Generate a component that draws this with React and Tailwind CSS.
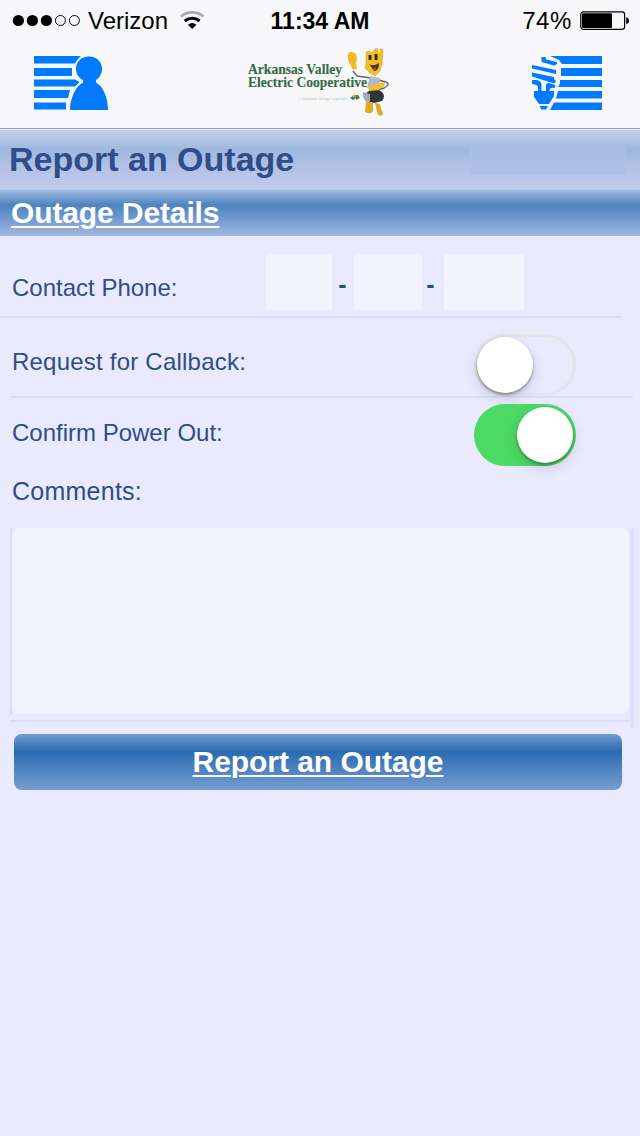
import React from 'react';

function SignalDots() {
  return (
    <svg className="ml-[12px] h-[14px] w-[70px]" viewBox="0 0 70 14">
      <circle cx="6.4" cy="6.5" r="5.6" />
      <circle cx="20.4" cy="6.5" r="5.6" />
      <circle cx="34.4" cy="6.5" r="5.6" />
      <circle cx="48.4" cy="6.5" r="5" fill="none" stroke="#000" />
      <circle cx="62.4" cy="6.5" r="5" fill="none" stroke="#000" />
    </svg>
  );
}

function WifiIcon() {
  return (
    <svg className="ml-[11px] h-[20px] w-[26px]" viewBox="0 0 26 20" fill="none">
      <path d="M2 5.5A17.5 17.5 0 0 1 24.4 5.5" stroke="#a9a9ab" strokeWidth="2.7" />
      <path d="M5.8 10A11.5 11.5 0 0 1 20.6 10" stroke="#000" strokeWidth="3" />
      <path d="M9 13.7Q13.2 10.3 17.4 13.7L13.2 18.1Z" fill="#000" />
    </svg>
  );
}

function BatteryIcon() {
  return (
    <svg className="ml-[8px] h-[20px] w-[50px]" viewBox="0 0 50 20">
      <rect x="0.8" y="0.8" width="43.8" height="17.6" rx="2.6" fill="none" stroke="#000" strokeWidth="1.2" />
      <rect x="2" y="2.2" width="30" height="14.8" rx="1" />
      <path d="M46.2 6.2Q49 6.8 49 9.6T46.2 13.2Z" />
    </svg>
  );
}

function StatusBar() {
  return (
    <div className="grid h-[40px] grid-cols-[1fr_auto_1fr] items-center pt-[2px] text-[24px] text-black">
      <div className="flex items-center">
        <SignalDots />
        <span className="ml-[6px]">Verizon</span>
        <WifiIcon />
      </div>
      <div className="text-[23px] font-bold">11:34 AM</div>
      <div className="flex items-center justify-end pr-[10px]">
        <span className="text-[24px] tracking-[0.6px]">74%</span>
        <BatteryIcon />
      </div>
    </div>
  );
}

function AccountIcon() {
  return (
    <svg className="h-[55px] w-[76px]" viewBox="0 0 76 55" fill="#007aff">
      <path d="M0 0H47Q43 3 41 7.5H0ZM0 12H38V20H0ZM0 23.5H41L45.5 26L41 30.5H0ZM0 34H36L34 42H0ZM0 46.5H32V53.5H0Z" />
      <path d="M55 .5C63 .5 68 6 68 13C68 18 65.5 21.5 62 24V26.5C69 30 74 42 74 54H36C36 42 42 30 49 26.5V24C45 22 42 18 42 13C42 6 47 .5 55 .5Z" />
    </svg>
  );
}

function OutageIcon() {
  return (
    <svg className="h-[55px] w-[70px]" viewBox="0 0 70 55" fill="#007aff">
      <path d="M18 0H70V8H30L27 4ZM29 12H70V20H29ZM28 24H70V31H26L28 28ZM26 35H70V42.5H24ZM22 46.5H70V54H18Z" />
      <path d="M9.5 1H13.5L14 3.5L25 6Q26 8 22 9.5L9.5 6ZM0 9L24 14V18L0 12.5ZM0 16.5L22 21V23L24 25L22 27.5L0 20.5Z" />
      <path d="M0 24H5Q9.5 25 9.5 29V35H14V30Q14 27 17 27L23 29V32Q17.5 31 17.5 35H22V40L17 48H7L2 41V35H6V31Q6 28.5 0 28Z" />
      <path d="M7.5 50H16L14 53.5H9.5Z" />
    </svg>
  );
}

function Logo() {
  return (
    <svg className="h-[76px] w-[150px]" viewBox="0 0 150 76">
      <g fill="#326b43" stroke="#326b43" strokeWidth=".1" fontFamily="'Liberation Serif', serif" fontWeight="bold">
        <text x="6" y="28.5" fontSize="14" textLength="94" lengthAdjust="spacingAndGlyphs">Arkansas Valley</text>
        <text x="6" y="42" fontSize="14" textLength="119" lengthAdjust="spacingAndGlyphs">Electric Cooperative</text>
      </g>
      <text x="56" y="54.5" fontSize="4.2" fill="#a9c9b3" fontFamily="'Liberation Serif', serif" textLength="50" lengthAdjust="spacingAndGlyphs">A Touchstone Energy Cooperative</text>
      <path d="M108 53L112 50L114 53L111 55Z" fill="#2a6f91" />
      <path d="M113 50L116 50L118 53L114 55Z" fill="#467d45" />
      <circle cx="112" cy="51" r="1.5" fill="#e5aa42" />
      <path d="M111 26L115 31L129 33L144 37Q149 39 142 43L135 45" fill="none" stroke="#65676d" strokeWidth="1.4" />
      <path d="M106 9Q107 6 111 7L114 9L115 14L114 18L115 23Q111 27 109 21L106 15Z" fill="#f0bb2b" />
      <path d="M124 8Q124 6 127 6L130 8L133 4Q136 2 136 6V8H138V4Q141 3 141 6L140 18L138 26L133 31L128 28L123 23L124 17Z" fill="#f3bd25" stroke="#d6a023" strokeWidth=".5" />
      <path d="M128 10V15M134 9V15" stroke="#28261e" strokeWidth="2.8" />
      <path d="M127 19Q131 22 137 18Q137 26 132 26Z" fill="#56321d" />
      <path d="M130 24L134 22L133 25Z" fill="#d65334" />
      <path d="M128 31L138 33L137 45L128 46L125 42Z" fill="#b6bac3" />
      <path d="M127 42L141 37Q145 39 141 42L134 46L127 47Z" fill="#f2c12d" />
      <path d="M127 46Q121 49 124 56L132 58L140 56Q144 51 140 47L137 45Z" fill="#30343c" />
      <path d="M121 47L128 49V58Q120 56 121 47Z" fill="#a4a8b1" />
      <path d="M124 57H131V66Q129 70 123 67ZM133 58L138 59L139 64L141 68Q141 72 136 70Z" fill="#dfaa25" />
    </svg>
  );
}

function Toggle({ on = false }) {
  return on ? (
    <button aria-label="Confirm Power Out" className="flex h-[62px] w-[102px] items-center justify-end rounded-full bg-[#4cd964] pr-[3px]">
      <span className="size-[56px] rounded-full bg-white shadow-[0_5px_14px_rgba(0,0,0,0.15),0_2px_3px_rgba(0,0,0,0.3)]" />
    </button>
  ) : (
    <button aria-label="Request for Callback" className="flex h-[62px] w-[102px] items-center rounded-full border-[3px] border-[#e5e5e8]">
      <span className="size-[56px] rounded-full bg-white shadow-[0_5px_14px_rgba(0,0,0,0.15),0_2px_3px_rgba(0,0,0,0.35)]" />
    </button>
  );
}

export default function App() {
  return (
    <div className="h-[1136px] w-[640px] overflow-hidden bg-[#e9eafe] font-['Liberation_Sans',sans-serif] text-[#304d87]">
      <header className="h-[130px] border-b border-[#e5e6fa] bg-[#f7f7f9]">
        <StatusBar />
        <nav className="flex h-[89px] items-start justify-between border-b border-[#9a9cb8] pr-[38px] pl-[34px]">
          <button aria-label="Account" className="pt-[16px]"><AccountIcon /></button>
          <div className="pt-[5px] pr-[8px]"><Logo /></div>
          <button aria-label="Outages" className="pt-[16px]"><OutageIcon /></button>
        </nav>
      </header>
      <div className="flex h-[60px] items-center justify-between bg-[linear-gradient(#c4cfed_0%,#9db7df_33%,#aebfe6_55%,#c2cdec_100%)] pr-[14px] pl-[9px]">
        <h1 className="pb-[2px] text-[34px] leading-[58px] font-bold">Report an Outage</h1>
        <div className="h-[29px] w-[157px] rounded-[3px] bg-[linear-gradient(#a8bde3,#aec0e8)]" />
      </div>
      <div className="h-[46px] bg-[linear-gradient(#a0b8df_0%,#4d84bf_33%,#749bd0_64%,#a0b7e2_100%)] pl-[11px]">
        <h2 className="text-[30px] leading-[46px] font-bold tracking-[-0.12px] text-white underline decoration-2 underline-offset-[3px]">Outage Details</h2>
      </div>
      <main className="text-[24px]">
        <section className="mr-[18px] flex h-[82px] items-start border-b-2 border-[#dadcfc] pt-[18px] pl-[12px]">
          <label className="w-[254px] pt-[16px] leading-[36px]">Contact Phone:</label>
          <div className="h-[56px] w-[66px] bg-[#f3f3ff]" />
          <span className="w-[22px] pr-[1px] text-center text-[25px] leading-[60px] font-bold">-</span>
          <div className="h-[56px] w-[68px] bg-[#f3f3ff]" />
          <span className="w-[22px] pr-[5px] text-center text-[25px] leading-[60px] font-bold">-</span>
          <div className="h-[56px] w-[80px] bg-[#f3f3ff]" />
        </section>
        <section className="mr-[7px] ml-[10px] flex h-[80px] items-start justify-between border-b-2 border-[#dadcfc] pt-[16px] pr-[57px] pl-[2px]">
          <label className="pt-[10px] leading-[36px] tracking-[0.22px]">Request for Callback:</label>
          <Toggle />
        </section>
        <section className="flex h-[76px] items-start justify-between pt-[6px] pr-[64px] pl-[12px]">
          <label className="pt-[11px] leading-[36px]">Confirm Power Out:</label>
          <Toggle on />
        </section>
        <label className="block h-[54px] pl-[12px] text-[25px] leading-[34px] tracking-[0.25px]">Comments:</label>
        <div className="ml-[10px] flex h-[200px] w-[624px] border-r-4 border-[#dedffd]">
          <div className="h-[194px] w-[620px] border-b-2 border-[#dcdcfc]">
            <div className="h-[186px] w-[619px] border-l-2 border-[#dcdcfc]">
              <textarea aria-label="Comments" className="block h-[186px] w-[617px] resize-none rounded-[8px] bg-[#f3f3ff] outline-none" />
            </div>
          </div>
        </div>
        <button className="mt-[6px] ml-[14px] block h-[56px] w-[608px] rounded-[8px] bg-[linear-gradient(#739bce_0%,#286ab2_31%,#4b80bf_60%,#759dd0_100%)] text-[30px] leading-[56px] font-bold tracking-[-0.05px] text-white underline decoration-2 underline-offset-[3px]">Report an Outage</button>
      </main>
    </div>
  );
}
